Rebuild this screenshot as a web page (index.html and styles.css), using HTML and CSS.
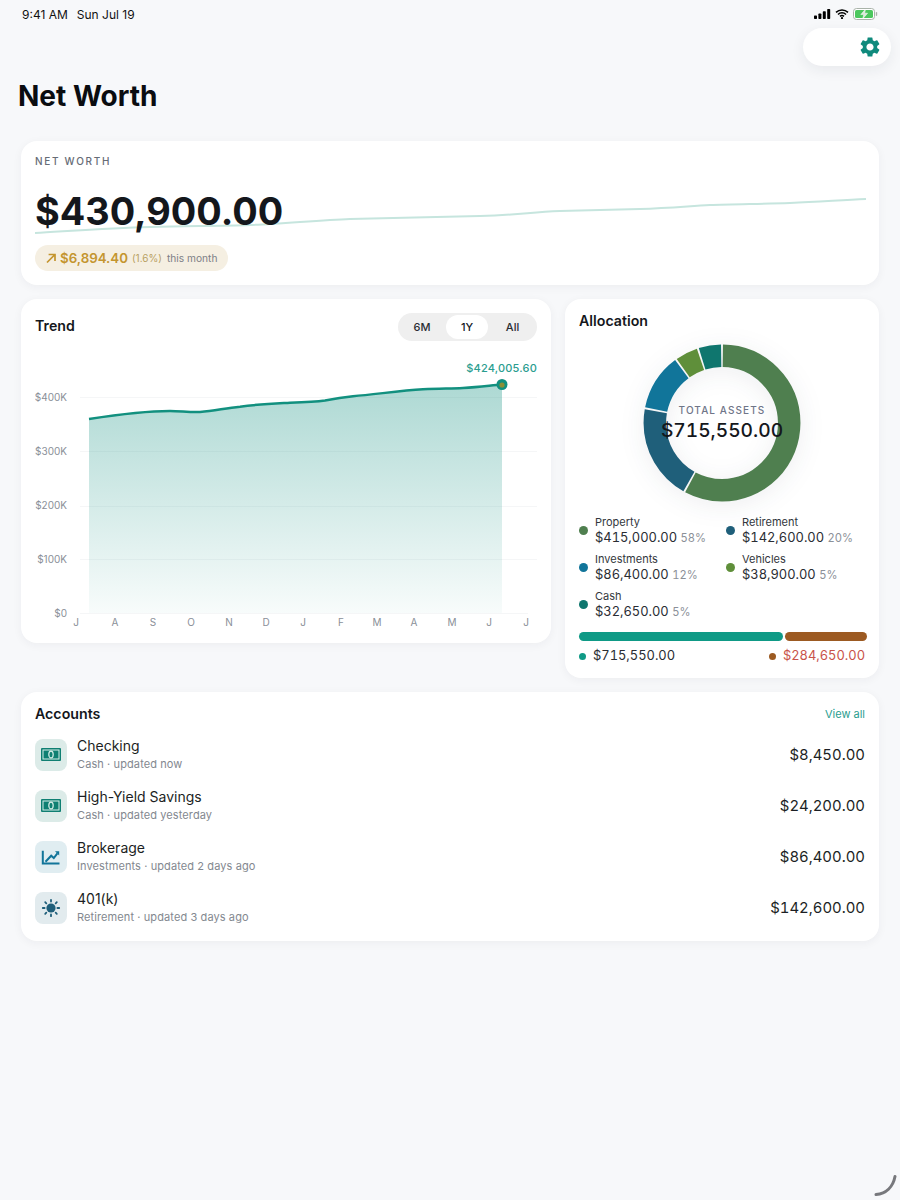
FILE: index.html
```html
<!doctype html>
<html>
<head>
    <meta charset="UTF-8" />
    <title>Net Worth</title>
    <link rel="stylesheet" href="styles.css">
</head>
<body>
    <div class="status">
        <div class="status-time"><span>9:41 AM</span><span>Sun Jul 19</span></div>
        <div class="status-icons">
            <svg width="17" height="10" viewBox="0 0 17 10"><rect x="0" y="6.5" width="3" height="3.5" rx=".7"/><rect x="4.4" y="4.5" width="3" height="5.5" rx=".7"/><rect x="8.8" y="2.2" width="3" height="7.8" rx=".7"/><rect x="13.2" y="0" width="3" height="10" rx=".7"/></svg>
            <svg width="14" height="10" viewBox="0 0 14 10"><path d="M1 3.4a8.6 8.6 0 0 1 12 0M3 5.5a5.7 5.7 0 0 1 8 0M5 7.4a2.9 2.9 0 0 1 4 0" fill="none" stroke="#000" stroke-width="1.5"/><circle cx="7" cy="9" r="1.1"/></svg>
            <svg width="25" height="12" viewBox="0 0 25 12"><rect x=".5" y=".5" width="21" height="11" rx="3" fill="#fff" stroke="#a9b3a9"/><rect x="2" y="2" width="18" height="8" rx="1.6" fill="#4cc75e"/><path d="M12.6 1 7.8 6.6h3L9.6 11l5-5.8h-3z" fill="#dfe6df" stroke="#fff" stroke-width=".5"/><rect x="22.8" y="4" width="1.4" height="4" rx=".7" fill="#a9b3a9"/></svg>
        </div>
    </div>

    <div class="settings-pill">
        <svg width="24" height="24" viewBox="0 0 24 24"><path fill="#0f8a7c" d="M19.14 12.94c.04-.3.06-.61.06-.94 0-.32-.02-.64-.07-.94l2.03-1.58a.49.49 0 0 0 .12-.61l-1.92-3.32a.488.488 0 0 0-.59-.22l-2.39.96c-.5-.38-1.03-.7-1.62-.94l-.36-2.54a.484.484 0 0 0-.48-.41h-3.84c-.24 0-.43.17-.47.41l-.36 2.54c-.59.24-1.13.57-1.62.94l-2.39-.96c-.22-.08-.47 0-.59.22L2.74 8.87c-.12.21-.08.47.12.61l2.03 1.58c-.05.3-.09.63-.09.94s.02.64.07.94l-2.03 1.58a.49.49 0 0 0-.12.61l1.92 3.32c.12.22.37.29.59.22l2.39-.96c.5.38 1.03.7 1.62.94l.36 2.54c.05.24.24.41.48.41h3.84c.24 0 .44-.17.47-.41l.36-2.54c.59-.24 1.13-.56 1.62-.94l2.39.96c.22.08.47 0 .59-.22l1.92-3.32c.12-.22.07-.47-.12-.61l-2.01-1.58zM12 15.6c-1.98 0-3.6-1.62-3.6-3.6s1.62-3.6 3.6-3.6 3.6 1.62 3.6 3.6-1.62 3.6-3.6 3.6z"/></svg>
    </div>

    <h1 class="page-title">Net Worth</h1>

    <div class="content">
        <section class="card hero">
            <svg class="hero-spark" width="831" height="36" viewBox="35 198 831 36"><path d="M35 233 C70 231 110 228 150 227 S220 226 250 225 S320 220 350 219 S440 217 480 216 S530 212 560 211 S610 210 640 209 S690 206 710 205 S760 204 790 203 S840 200 866 199" fill="none" stroke="#c6e5de" stroke-width="2"/></svg>
            <div class="hero-label">NET WORTH</div>
            <div class="hero-amount">$430,900.00</div>
            <div class="hero-change">
                <svg width="12" height="12" viewBox="0 0 12 12"><path d="M2 10.5 10 2.5M3.6 2.5H10V8.9" fill="none" stroke="#c4952f" stroke-width="1.7"/></svg>
                <span class="change-value">$6,894.40</span>
                <span class="change-pct">(1.6%)</span>
                <span class="change-note">this month</span>
            </div>
        </section>

        <div class="columns">
            <section class="card trend">
                <div class="trend-head">
                    <h2 class="card-title">Trend</h2>
                    <div class="segments">
                        <span class="segment">6M</span>
                        <span class="segment active">1Y</span>
                        <span class="segment">All</span>
                    </div>
                </div>
                <svg class="trend-chart" width="502" height="275" viewBox="35 354 502 275">
                    <defs>
                        <linearGradient id="areaFill" x1="0" y1="0" x2="0" y2="1">
                            <stop offset="0" stop-color="#0f8f7f" stop-opacity=".34"/>
                            <stop offset="1" stop-color="#0f8f7f" stop-opacity=".03"/>
                        </linearGradient>
                    </defs>
                    <g class="grid-lines">
                        <line x1="80" x2="537" y1="397.5" y2="397.5"/>
                        <line x1="80" x2="537" y1="451.5" y2="451.5"/>
                        <line x1="80" x2="537" y1="506.5" y2="506.5"/>
                        <line x1="80" x2="537" y1="559.5" y2="559.5"/>
                        <line x1="80" x2="528" y1="613.5" y2="613.5"/>
                    </g>
                    <path fill="url(#areaFill)" d="M89 419 C115 415 145 411 170 411 C180 411 190 412.5 200 412 C215 411 225 408 240 406.7 C260 404 275 403.5 290 402.7 C305 402.3 315 402 325 400.5 C335 398.5 345 397 353 396.2 C375 394.5 400 390.5 423 389.3 C440 388.5 450 388.6 463 388 C480 387 490 385.5 502 384.5 V613 H89 Z"/>
                    <path class="trend-line" d="M89 419 C115 415 145 411 170 411 C180 411 190 412.5 200 412 C215 411 225 408 240 406.7 C260 404 275 403.5 290 402.7 C305 402.3 315 402 325 400.5 C335 398.5 345 397 353 396.2 C375 394.5 400 390.5 423 389.3 C440 388.5 450 388.6 463 388 C480 387 490 385.5 502 384.5"/>
                    <circle cx="502" cy="384.5" r="5.5" fill="#12907f"/>
                    <circle cx="502" cy="385" r="2.6" fill="#8c8f35"/>
                    <text class="peak-label" x="537" y="372" text-anchor="end">$424,005.60</text>
                    <g class="axis-y" text-anchor="end">
                        <text x="67" y="401">$400K</text>
                        <text x="67" y="455">$300K</text>
                        <text x="67" y="509">$200K</text>
                        <text x="67" y="563">$100K</text>
                        <text x="67" y="617">$0</text>
                    </g>
                    <g class="axis-x" text-anchor="middle">
                        <text x="76" y="626">J</text>
                        <text x="115" y="626">A</text>
                        <text x="153" y="626">S</text>
                        <text x="191" y="626">O</text>
                        <text x="229" y="626">N</text>
                        <text x="266" y="626">D</text>
                        <text x="303" y="626">J</text>
                        <text x="341" y="626">F</text>
                        <text x="377" y="626">M</text>
                        <text x="414" y="626">A</text>
                        <text x="452" y="626">M</text>
                        <text x="489" y="626">J</text>
                        <text x="526" y="626">J</text>
                    </g>
                </svg>
            </section>

            <section class="card allocation">
                <h2 class="card-title">Allocation</h2>
                <div class="donut">
                    <svg width="160" height="160" viewBox="0 0 160 160">
                        <g fill="none" stroke-width="22.5" transform="rotate(-90 80 80)">
                            <circle cx="80" cy="80" r="67.2" pathLength="100" stroke="#4f7f4f" stroke-dasharray="57.6 42.4" stroke-dashoffset="-.2"/>
                            <circle cx="80" cy="80" r="67.2" pathLength="100" stroke="#1f5f7a" stroke-dasharray="19.6 80.4" stroke-dashoffset="-58.2"/>
                            <circle cx="80" cy="80" r="67.2" pathLength="100" stroke="#11759a" stroke-dasharray="11.6 88.4" stroke-dashoffset="-78.2"/>
                            <circle cx="80" cy="80" r="67.2" pathLength="100" stroke="#5f8f3a" stroke-dasharray="4.6 95.4" stroke-dashoffset="-90.2"/>
                            <circle cx="80" cy="80" r="67.2" pathLength="100" stroke="#0f766e" stroke-dasharray="4.6 95.4" stroke-dashoffset="-95.2"/>
                        </g>
                    </svg>
                    <div class="donut-center">
                        <div class="donut-label">TOTAL ASSETS</div>
                        <div class="donut-value">$715,550.00</div>
                    </div>
                </div>
                <div class="legend">
                    <div class="legend-item"><i class="dot property"></i><div><div class="legend-name">Property</div><div class="legend-value">$415,000.00 <small>58%</small></div></div></div>
                    <div class="legend-item"><i class="dot retirement"></i><div><div class="legend-name">Retirement</div><div class="legend-value">$142,600.00 <small>20%</small></div></div></div>
                    <div class="legend-item"><i class="dot investments"></i><div><div class="legend-name">Investments</div><div class="legend-value">$86,400.00 <small>12%</small></div></div></div>
                    <div class="legend-item"><i class="dot vehicles"></i><div><div class="legend-name">Vehicles</div><div class="legend-value">$38,900.00 <small>5%</small></div></div></div>
                    <div class="legend-item"><i class="dot cash"></i><div><div class="legend-name">Cash</div><div class="legend-value">$32,650.00 <small>5%</small></div></div></div>
                </div>
                <div class="split-bar">
                    <div class="split-assets"></div>
                    <div class="split-debts"></div>
                </div>
                <div class="split-legend">
                    <div class="split-item"><i class="dot small assets"></i>$715,550.00</div>
                    <div class="split-item debts"><i class="dot small liabilities"></i>$284,650.00</div>
                </div>
            </section>
        </div>

        <section class="card accounts">
            <div class="accounts-head">
                <h2 class="card-title">Accounts</h2>
                <a class="view-all">View all</a>
            </div>
            <div class="account-list">
                <div class="account">
                    <div class="account-icon mint">
                        <svg width="20" height="13" viewBox="0 0 20 13"><rect width="20" height="13" rx="1" fill="#0f7f72"/><rect x="2" y="2" width="16" height="9" fill="none" stroke="#d9efe9" stroke-width="1"/><ellipse cx="10" cy="6.5" rx="2.2" ry="3.4" fill="none" stroke="#d9efe9" stroke-width="1.2"/></svg>
                    </div>
                    <div class="account-text"><div class="account-name">Checking</div><div class="account-sub">Cash · updated now</div></div>
                    <div class="account-amount">$8,450.00</div>
                </div>
                <div class="account">
                    <div class="account-icon mint">
                        <svg width="20" height="13" viewBox="0 0 20 13"><rect width="20" height="13" rx="1" fill="#0f7f72"/><rect x="2" y="2" width="16" height="9" fill="none" stroke="#d9efe9" stroke-width="1"/><ellipse cx="10" cy="6.5" rx="2.2" ry="3.4" fill="none" stroke="#d9efe9" stroke-width="1.2"/></svg>
                    </div>
                    <div class="account-text"><div class="account-name">High-Yield Savings</div><div class="account-sub">Cash · updated yesterday</div></div>
                    <div class="account-amount">$24,200.00</div>
                </div>
                <div class="account">
                    <div class="account-icon sky">
                        <svg width="20" height="20" viewBox="0 0 20 20"><path d="M1.8 3.7V16.6H18.5" fill="none" stroke="#11759a" stroke-width="2"/><path d="M4.5 14.7 10.2 8.7 12.8 11 16.4 6.4" fill="none" stroke="#11759a" stroke-width="2"/><path d="M14 4.2H18.2V8.6z" fill="#11759a"/></svg>
                    </div>
                    <div class="account-text"><div class="account-name">Brokerage</div><div class="account-sub">Investments · updated 2 days ago</div></div>
                    <div class="account-amount">$86,400.00</div>
                </div>
                <div class="account">
                    <div class="account-icon slate">
                        <svg width="20" height="20" viewBox="0 0 20 20"><circle cx="10" cy="10" r="4.6" fill="#1f5f7a"/><path d="M10 1.8V3.6M10 16.4V18.2M1.8 10H3.6M16.4 10H18.2M4.2 4.2 5.3 5.3M14.7 14.7 15.8 15.8M4.2 15.8 5.3 14.7M14.7 5.3 15.8 4.2" fill="none" stroke="#1f5f7a" stroke-width="1.8" stroke-linecap="round"/></svg>
                    </div>
                    <div class="account-text"><div class="account-name">401(k)</div><div class="account-sub">Retirement · updated 3 days ago</div></div>
                    <div class="account-amount">$142,600.00</div>
                </div>
            </div>
        </section>
    </div>

    <svg class="corner-arc" width="24" height="22" viewBox="0 0 24 22"><path d="M2 20.5C12 19.5 19 13 21 2.5" fill="none" stroke="#77787c" stroke-width="3" stroke-linecap="round"/></svg>
</body>
</html>
```

FILE: styles.css
```css
* {
    box-sizing: border-box;
}

body {
    margin: 0;
    height: 1200px;
    position: relative;
    overflow: hidden;
    background-color: #f7f8fa;
    color: #14171c;
    font-family: "Inter", "Liberation Sans", sans-serif;
}

/* status bar */
.status {
    height: 28px;
    padding: 0 22px;
    display: flex;
    justify-content: space-between;
    align-items: center;
}

.status-time {
    display: flex;
    gap: 9px;
    font-size: 12px;
    color: #111;
}

.status-icons {
    display: flex;
    align-items: center;
    gap: 4px;
}

.settings-pill {
    position: absolute;
    top: 28px;
    left: 803px;
    width: 88px;
    height: 38px;
    padding-right: 9px;
    display: flex;
    justify-content: flex-end;
    align-items: center;
    background-color: #fff;
    border-radius: 19px;
    box-shadow: 0 4px 14px rgba(30, 40, 60, .07);
}

.page-title {
    margin: 50px 0 27px;
    padding: 0 18px;
    font-size: 28px;
    line-height: 36px;
    font-weight: 700;
    color: #0a0c10;
}

.content {
    padding: 0 21px;
    display: flex;
    flex-direction: column;
    gap: 14px;
}

.card {
    background-color: #fff;
    border-radius: 16px;
    padding: 14px;
    box-shadow: 0 2px 10px rgba(30, 40, 60, .05);
}

.card-title {
    margin: 0;
    font-size: 14.2px;
    line-height: 16px;
    font-weight: 600;
}

/* hero */
.hero {
    position: relative;
    height: 144px;
}

.hero-spark {
    position: absolute;
    left: 14px;
    top: 57px;
}

.hero-label {
    position: relative;
    font-size: 10px;
    line-height: 12px;
    letter-spacing: 1.7px;
    font-weight: 500;
    color: #666c76;
}

.hero-amount {
    position: relative;
    margin-top: 20px;
    font-size: 37.8px;
    line-height: 48px;
    font-weight: 700;
}

.hero-change {
    position: relative;
    margin-top: 10px;
    width: 193px;
    height: 26px;
    padding-left: 10px;
    display: flex;
    align-items: center;
    gap: 3px;
    border-radius: 13px;
    background-color: #f5efe2;
}

.change-value {
    font-size: 13.3px;
    font-weight: 600;
    color: #c4952f;
}

.change-pct {
    margin-left: 1px;
    font-size: 10px;
    color: #b89f63;
}

.change-note {
    margin-left: 2px;
    font-size: 10.2px;
    color: #7d8087;
}

/* trend */
.columns {
    display: flex;
    align-items: flex-start;
    gap: 14px;
}

.trend {
    width: 530px;
    height: 344px;
}

.trend-head {
    display: flex;
    justify-content: space-between;
    align-items: center;
}

.trend-head .card-title {
    margin-bottom: 2px;
}

.segments {
    width: 139px;
    height: 28px;
    padding: 2px 0;
    display: grid;
    grid-template-columns: 48px 42px 49px;
    border-radius: 14px;
    background-color: #efefef;
}

.segment {
    display: flex;
    justify-content: center;
    align-items: center;
    font-size: 11px;
    font-weight: 500;
    color: #2a2d33;
    border-radius: 12px;
}

.segment.active {
    background-color: #fff;
    color: #14171c;
}

.trend-chart {
    display: block;
    margin-top: 13px;
}

.grid-lines line {
    stroke: #f5f6f7;
    stroke-width: 1;
}

.trend-line {
    fill: none;
    stroke: #12907f;
    stroke-width: 2.5;
}

.peak-label {
    font-size: 11px;
    font-weight: 500;
    letter-spacing: .2px;
    fill: #2a9d8f;
}

.axis-y text, .axis-x text {
    font-size: 10px;
    fill: #8a8f98;
}

/* allocation */
.allocation {
    width: 314px;
    height: 379px;
}

.donut {
    position: relative;
    margin-top: 14px;
    height: 160px;
    display: flex;
    justify-content: center;
}

.donut svg {
    filter: drop-shadow(0 4px 12px rgba(30, 40, 60, .08));
}

.donut-center {
    position: absolute;
    left: 0;
    right: 0;
    top: 60px;
    text-align: center;
}

.donut-label {
    font-size: 10px;
    line-height: 14px;
    letter-spacing: 1.1px;
    font-weight: 500;
    color: #6f7588;
}

.donut-value {
    margin-top: 1px;
    font-size: 19.2px;
    line-height: 24px;
    font-weight: 500;
    font-variant-numeric: tabular-nums;
    color: #14171c;
}

.legend {
    margin-top: 12px;
    display: grid;
    grid-template-columns: 147px auto;
    row-gap: 6px;
}

.legend-item {
    display: flex;
    align-items: center;
    gap: 7px;
}

.dot {
    flex: none;
    width: 9px;
    height: 9px;
    border-radius: 50%;
}

.dot.small {
    width: 7px;
    height: 7px;
}

.property { background-color: #4f7f4f; }
.retirement { background-color: #1f5f7a; }
.investments { background-color: #11759a; }
.vehicles { background-color: #5f8f3a; }
.cash { background-color: #0f766e; }
.assets { background-color: #0f9a86; }
.liabilities { background-color: #9c5a22; }

.legend-name {
    font-size: 11px;
    line-height: 15px;
    color: #33373d;
}

.legend-value {
    font-size: 12.9px;
    line-height: 15px;
    font-variant-numeric: tabular-nums;
    color: #2a2d33;
}

.legend-value small {
    font-size: 11.2px;
    color: #8b9098;
}

.split-bar {
    margin-top: 12px;
    margin-right: -2px;
    display: flex;
    gap: 2px;
}

.split-assets, .split-debts {
    height: 9px;
    border-radius: 5px;
}

.split-assets {
    width: 204px;
    background-color: #0f9a86;
}

.split-debts {
    width: 82px;
    background-color: #9c5a22;
}

.split-legend {
    margin-top: 6px;
    display: flex;
    justify-content: space-between;
}

.split-item {
    display: flex;
    align-items: center;
    gap: 7px;
    font-size: 12.9px;
    line-height: 18px;
    font-variant-numeric: tabular-nums;
    color: #2a2d33;
}

.split-item.debts {
    color: #c9534a;
}

/* accounts */
.accounts {
    height: 249px;
}

.accounts-head {
    display: flex;
    justify-content: space-between;
    align-items: center;
}

.view-all {
    font-size: 11px;
    color: #2a9d8f;
}

.account-list {
    margin-top: 15px;
    display: flex;
    flex-direction: column;
    gap: 16px;
}

.account {
    height: 35px;
    display: flex;
    align-items: center;
    gap: 10px;
}

.account-icon {
    flex: none;
    width: 32px;
    height: 32px;
    display: flex;
    justify-content: center;
    align-items: center;
    border-radius: 8px;
}

.account-icon.mint { background-color: #dcebe8; }
.account-icon.sky { background-color: #e0edf1; }
.account-icon.slate { background-color: #e2ebee; }

.account-text {
    flex: 1;
}

.account-name {
    font-size: 14px;
    line-height: 18px;
    color: #1c1f24;
}

.account-sub {
    margin-top: 2px;
    font-size: 11px;
    line-height: 15px;
    letter-spacing: .1px;
    color: #83888f;
}

.account-amount {
    font-size: 14.9px;
    font-variant-numeric: tabular-nums;
    color: #1c1f24;
}

.corner-arc {
    position: absolute;
    left: 874px;
    top: 1174px;
}
```
